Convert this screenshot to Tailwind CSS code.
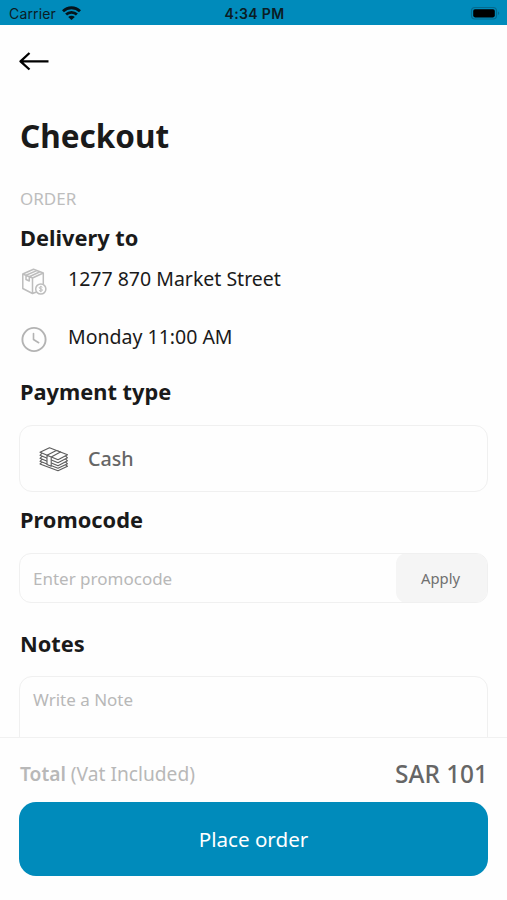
<!DOCTYPE html>
<html lang="en">
<head>
<meta charset="utf-8">
<meta name="viewport" content="width=device-width, initial-scale=1">
<title>Checkout</title>
<script src="https://cdn.jsdelivr.net/npm/@tailwindcss/browser@4"></script>
</head>
<body class="bg-white">
<div class="flex h-[900px] w-[507px] flex-col overflow-hidden bg-[#fefefe] font-['Noto_Sans',sans-serif] text-[#1a1a1a]">
  <header class="grid h-[25px] shrink-0 grid-cols-3 items-center bg-[#008bbb] pt-[3px] pr-[7px] pl-[9px] font-['Inter',sans-serif] text-[14px] leading-[22px] text-[#0b1c24]">
    <div class="flex items-center gap-[6px]">
      <span class="tracking-[0.15px]">Carrier</span>
      <svg class="-mt-[3px] h-[14px] w-[19px]" viewBox="0 0 19 14" fill="none" stroke="#05141b" stroke-width="2.800"><path d="M1 5.200C5.800.6 13.200.6 18 5.200M4.100 8.600c3-2.900 7.800-2.900 10.800 0"/><path d="M9.500 14 6.200 10.900c1.900-1.600 4.700-1.600 6.600 0Z" fill="#05141b" stroke="none"/></svg>
    </div>
    <div class="text-center text-[14px] font-semibold tracking-[0.35px] whitespace-nowrap">4:34 PM</div>
    <div class="flex justify-end">
      <svg class="-mt-[3px] h-[14px] w-[30px]" viewBox="0 0 30 14"><rect x="1.500" y="1.500" width="25" height="11.500" rx="3.500" fill="none" stroke="#046a8e" stroke-width="1.200"/><rect x="3.200" y="3.200" width="21.600" height="8.200" rx="1.800" fill="#000"/><path d="M28 5.500c1.600.6 1.600 2.900 0 3.500Z" fill="#046a8e"/></svg>
    </div>
  </header>

  <main class="flex min-h-0 flex-1 flex-col overflow-hidden px-[19px]">
    <svg class="mt-[26px] h-[20px] w-[30px] shrink-0" viewBox="0 0 30 20" fill="none" stroke="#000" stroke-width="2.300" stroke-linejoin="round"><path d="M29.500 10.300H1.500M10.500 2 1.500 10.300 10.500 18.500"/></svg>
    <h1 class="mt-[45px] h-[40px] shrink-0 pl-px text-[31.500px] leading-[40px] font-bold">Checkout</h1>
    <p class="mt-[33px] h-[20px] shrink-0 pl-px text-[17px] leading-[20px] text-[#bdbdbd]">ORDER</p>
    <h2 class="mt-[14px] h-[30px] shrink-0 pl-px text-[21.800px] leading-[30px] font-bold">Delivery to</h2>
    <div class="mt-[14px] flex h-[28px] shrink-0 gap-[20px]">
      <svg class="h-[28px] w-[29px]" viewBox="0 0 29 28" fill="none" stroke="#bdbdbd" stroke-width="1.500" stroke-linejoin="round"><path d="M17.500 25 13.500 26.500 3.800 21.500V7L14.500 2.300 24.300 6v11M3.800 7l9.700 4L24.300 6M13.500 11v15.500M7 8.300 17.700 3.600M10.300 9.700 21 4.800M7 8.300V12.500l3.300 1.500V9.700"/><circle cx="21.800" cy="22" r="5.100" fill="#fefefe"/><path d="M23.400 20.300c-1-1-3.200-.6-3.200.5 0 1.400 3.300.8 3.300 2.200 0 1.300-2.500 1.500-3.500.4M21.800 18.800v6.400" stroke-width="1"/></svg>
      <span class="-mt-[2px] text-[19.500px] leading-[28px] whitespace-nowrap">1277 870 Market Street</span>
    </div>
    <div class="mt-[30px] flex h-[28px] shrink-0 gap-[20px]">
      <svg class="h-[28px] w-[29px]" viewBox="0 0 29 28" fill="none" stroke="#b3b3b3" stroke-width="1.900" stroke-linecap="round" stroke-linejoin="round"><circle cx="15" cy="14.500" r="11.600"/><path d="M14.500 8.500v6l5.200 3.200" stroke-width="1.600"/></svg>
      <span class="-mt-[2px] text-[19.500px] leading-[28px] whitespace-nowrap">Monday 11:00 AM</span>
    </div>
    <h2 class="mt-[24px] h-[30px] shrink-0 pl-px text-[21.800px] leading-[30px] font-bold">Payment type</h2>
    <div class="mt-[18px] flex h-[67px] shrink-0 items-center gap-[19px] rounded-[13px] border border-[#f0f0f0] pl-[19px]">
      <svg class="h-[26px] w-[30px]" viewBox="0 0 30 26" fill="none" stroke="#5c5c5c" stroke-width="1.100" stroke-linejoin="round"><path d="M1 6.300 10.500 1.800 28.500 8.800 19 13.800ZM3 7.200 1 9.300 19 16.800 28.500 11.800 26.500 9.900M3 10.300 1 12.300 19 19.800 28.500 14.800 26.500 12.900M3 13.300 1 15.300 19 22.300 28.500 17.800 26.500 15.900M3 16.300 1 17.900 19 24.800 28.500 20.300 26.500 18.900"/><path d="M8 9.200 17.300 4.500 21.500 6.100 12.200 10.900ZM8 9.200v9.300l4.200 1.700v-9.300" fill="#fefefe"/></svg>
      <span class="text-[19.700px] leading-[28px] font-medium text-[#666]">Cash</span>
    </div>
    <h2 class="mt-[13px] h-[30px] shrink-0 pl-px text-[21.800px] leading-[30px] font-bold">Promocode</h2>
    <div class="mt-[18px] flex h-[50px] shrink-0 overflow-hidden rounded-[12px] border border-[#f0f0f0]">
      <span class="flex-1 pl-[13px] text-[17px] leading-[49px] text-[#b8b8b8]">Enter promocode</span>
      <button class="-my-px w-[91px] rounded-[11px] bg-[#f5f5f5] pr-[2px] text-[14.800px] text-[#707070]">Apply</button>
    </div>
    <h2 class="mt-[26px] h-[30px] shrink-0 pl-px text-[21.800px] leading-[30px] font-bold">Notes</h2>
    <div class="mt-[17px] h-[120px] shrink-0 rounded-[13px] border border-[#f0f0f0] pt-[11px] pl-[13px] text-[17px] leading-[24px] text-[#b8b8b8]">Write a Note</div>
  </main>

  <footer class="h-[163px] shrink-0 border-t border-[#f1f1f1] px-[19px] pt-[20px]">
    <div class="flex h-[32px] items-center justify-between whitespace-nowrap">
      <span class="pl-px text-[19.200px] text-[#b8b8b8]"><span class="font-semibold">Total</span> (Vat Included)</span>
      <span class="text-[24.400px] font-medium text-[#666]">SAR 101</span>
    </div>
    <button class="mt-[12px] h-[74px] w-full rounded-[17px] bg-[#008bbb] text-[20.600px] text-white">Place order</button>
  </footer>
</div>
</body>
</html>
